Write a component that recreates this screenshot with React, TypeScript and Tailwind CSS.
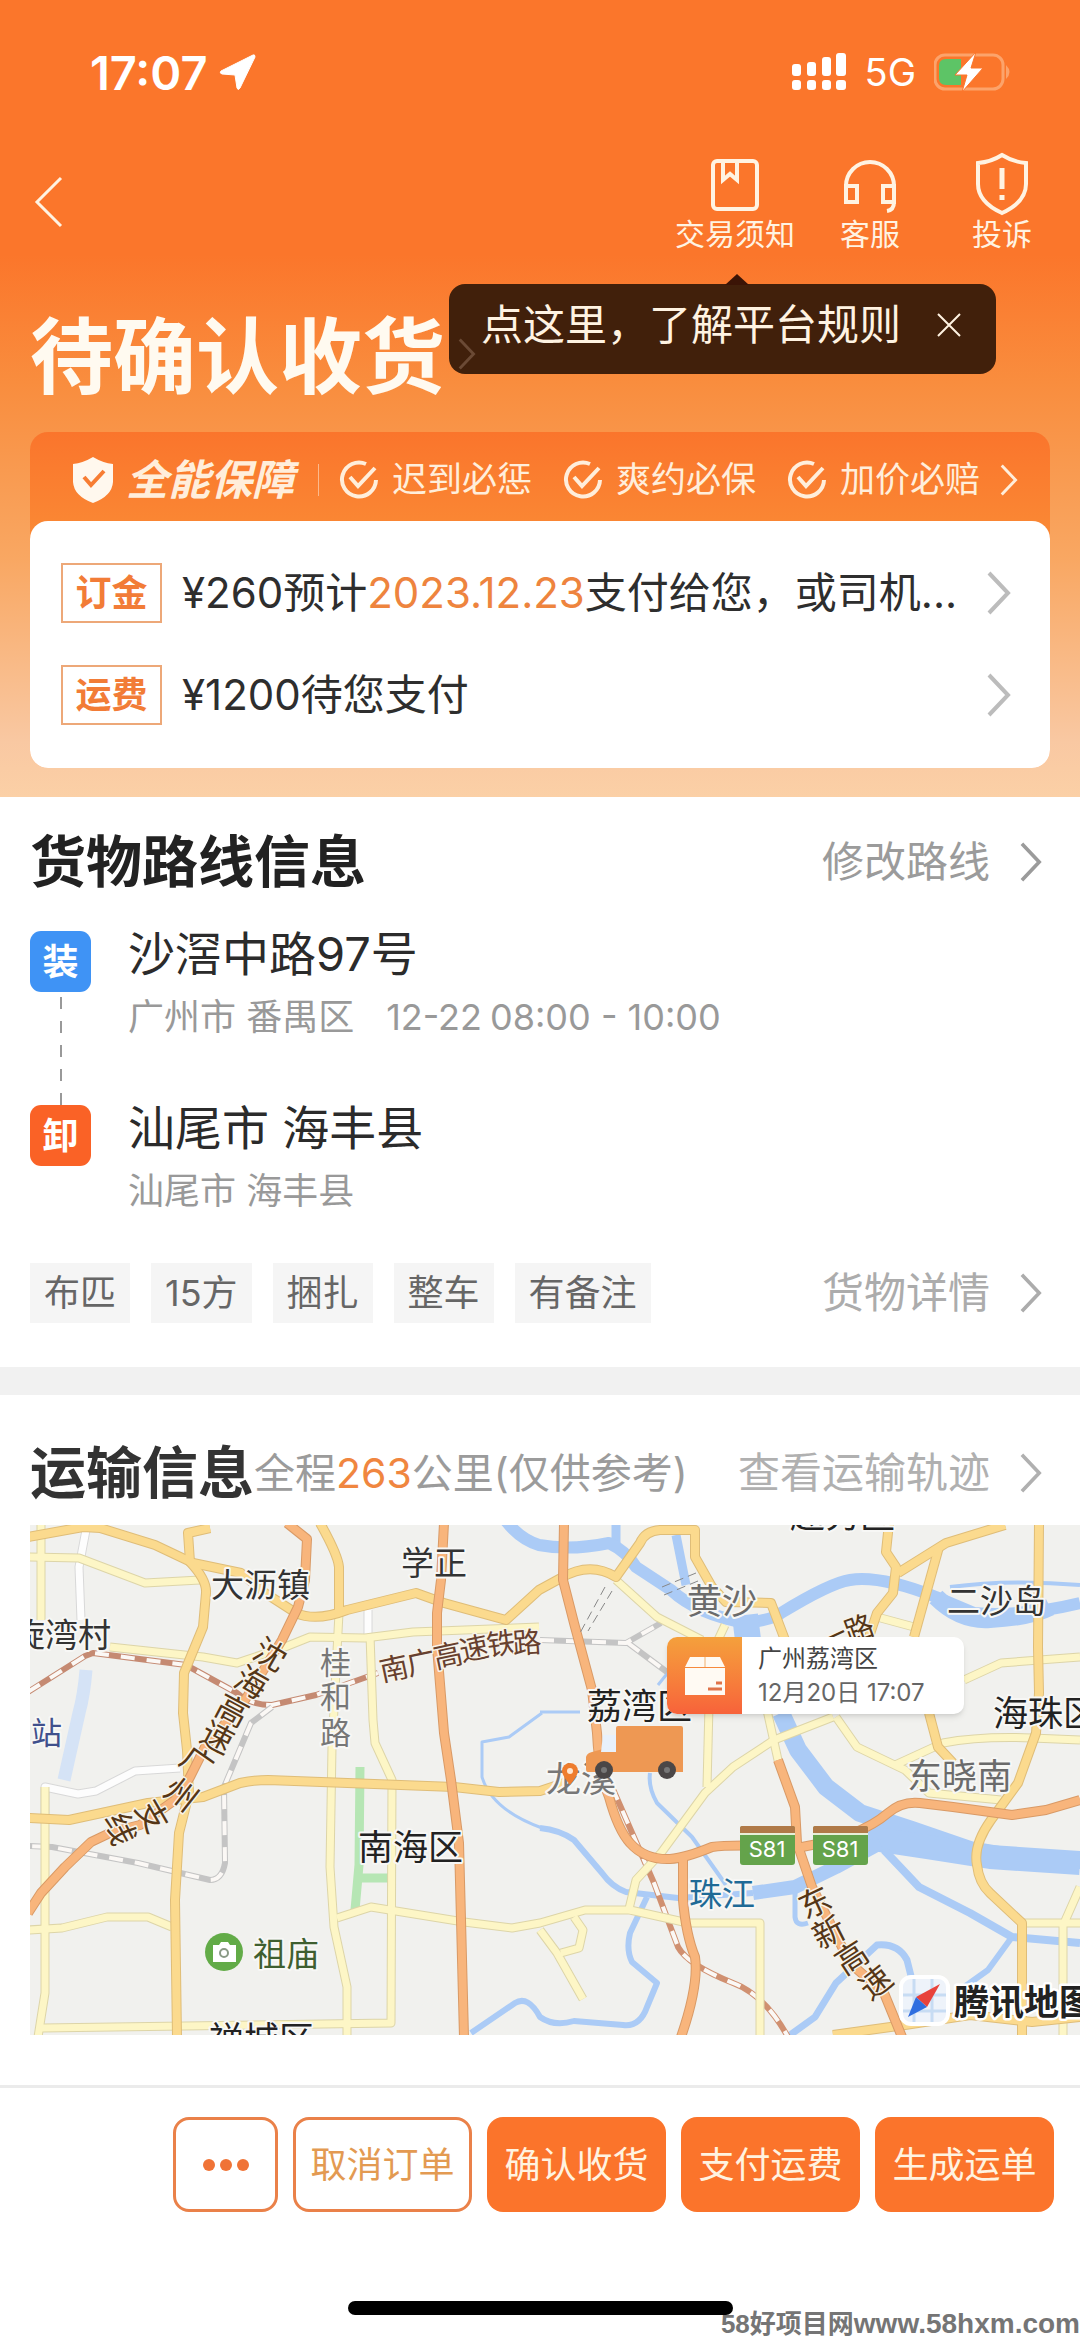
import React from "react";

type ChevronProps = { className?: string; width?: number };

function ChevronRight({ className = "", width = 4 }: ChevronProps) {
  return (
    <svg
      viewBox="0 0 24 44"
      className={className}
      fill="none"
      stroke="currentColor"
      strokeWidth={width}
      aria-hidden="true"
    >
      <path d="M2 2 L21 22 L2 42" />
    </svg>
  );
}

function StatusBar() {
  return (
    <div className="flex h-36 items-center justify-between pl-[90px] pr-[70px] text-white">
      <div className="flex items-center gap-[10px]">
        <span className="text-[47px] font-semibold leading-none">17:07</span>
        <svg viewBox="0 0 38 38" className="h-[38px] w-[38px]" aria-hidden="true">
          <path
            d="M35 2 L3 18 Q1 20 4 21 L17 22 L19 35 Q20 38 22 35 L37 4 Q37 1 35 2Z"
            fill="currentColor"
            stroke="currentColor"
            strokeLinejoin="round"
          />
        </svg>
      </div>
      <div className="flex items-center gap-[18px]">
        <svg viewBox="0 0 56 40" className="h-10 w-14" fill="currentColor" aria-hidden="true">
          <rect x="1" y="12" width="9" height="12" rx="3" />
          <rect x="16" y="10" width="9" height="14" rx="3" />
          <rect x="31" y="5" width="9" height="19" rx="3" />
          <rect x="45" y="1" width="10" height="23" rx="3" />
          <rect x="1" y="28" width="9" height="10" rx="3" />
          <rect x="16" y="28" width="9" height="10" rx="3" />
          <rect x="31" y="28" width="9" height="10" rx="3" />
          <rect x="45" y="28" width="10" height="10" rx="3" />
        </svg>
        <span className="text-[38px] leading-none">5G</span>
        <svg viewBox="0 0 76 42" className="h-[42px] w-[76px]" aria-hidden="true">
          <rect x="1" y="4" width="68" height="34" rx="10" fill="none" stroke="#fca36b" strokeWidth="3" />
          <path d="M12 8 H27 V34 H12 Q5 34 5 27 V15 Q5 8 12 8Z" fill="#5dc466" />
          <path d="M72 14 Q79 21 72 28Z" fill="#fca36b" />
          <path d="M42 1 L21 24 H33 L28 41 L49 17 H37 Z" fill="#fff" stroke="#fb762b" strokeWidth="1" />
        </svg>
      </div>
    </div>
  );
}

function NavBar() {
  return (
    <div className="relative flex h-[116px] items-center justify-between pl-[34px] pr-[46px] text-[#fff3e2]">
      <button type="button" aria-label="返回">
        <svg viewBox="0 0 30 52" className="h-[52px] w-[30px]" fill="none" stroke="currentColor" strokeWidth="3">
          <path d="M27 2 L3 26 L27 50" />
        </svg>
      </button>
      <div className="flex">
        <button type="button" className="flex flex-col items-center">
          <svg viewBox="0 0 64 64" className="h-16 w-16" fill="none" stroke="currentColor" strokeWidth="4" aria-hidden="true">
            <rect x="10" y="9" width="44" height="48" rx="4" />
            <path d="M20 9 V28 L27 22 L34 28 V9" />
          </svg>
          <span className="text-[30px] leading-9">交易须知</span>
        </button>
        <button type="button" className="ml-[43px] flex flex-col items-center">
          <svg viewBox="0 0 64 64" className="h-16 w-16" fill="none" stroke="currentColor" strokeWidth="4" aria-hidden="true">
            <path d="M8 50 V34 A24 24 0 0 1 56 34 V50 Q56 58 49 59" />
            <rect x="8" y="34" width="11" height="16" />
            <rect x="45" y="34" width="11" height="16" />
          </svg>
          <span className="text-[30px] leading-9">客服</span>
        </button>
        <button type="button" className="ml-[68px] flex flex-col items-center">
          <svg viewBox="0 0 64 64" className="h-16 w-16" fill="none" stroke="currentColor" strokeWidth="4" aria-hidden="true">
            <path d="M32 3 Q43 10 56 11 V32 Q56 50 32 61 Q8 50 8 32 V11 Q21 10 32 3Z" />
            <path d="M32 16 V37 M32 43 V48" strokeWidth="5" />
          </svg>
          <span className="text-[30px] leading-9">投诉</span>
        </button>
      </div>
      <div className="absolute right-[84px] top-[140px] flex h-[90px] items-center gap-9 rounded-[16px] bg-[#41200b] pb-2 pl-[32px] pr-[35px]">
        <svg viewBox="0 0 24 11" className="absolute -top-[10px] left-[276px] h-[11px] w-6" aria-hidden="true">
          <path d="M0 11 L12 0 L24 11Z" fill="#3b1406" />
        </svg>
        <ChevronRight className="absolute left-2 top-[54px] h-8 w-5 text-[#6b4a35]" />
        <span className="text-[42px] leading-none">点这里，了解平台规则</span>
        <button type="button" aria-label="关闭">
          <svg viewBox="0 0 24 24" className="h-6 w-6" stroke="currentColor" strokeWidth="2">
            <path d="M1 1 L23 23 M23 1 L1 23" />
          </svg>
        </button>
      </div>
    </div>
  );
}

function Promise({ label }: { label: string }) {
  return (
    <span className="flex items-center gap-[13px]">
      <svg viewBox="0 0 40 40" className="h-10 w-10" fill="none" stroke="currentColor" strokeWidth="4" aria-hidden="true">
        <path d="M27 4 A17 17 0 1 0 37 20" />
        <path d="M11 17 L19 26 L36 8" />
      </svg>
      <span className="text-[35px] leading-none">{label}</span>
    </span>
  );
}

function PayRow({ tag, children }: { tag: string; children: React.ReactNode }) {
  return (
    <button type="button" className="flex w-full items-center text-left">
      <span className="flex h-[60px] w-[101px] shrink-0 items-center justify-center border-2 border-[#eda878] text-[36px] font-bold leading-none text-[#f27c37]">
        {tag}
      </span>
      <span className="ml-5 min-w-0 grow whitespace-nowrap text-[42px] leading-[60px] text-[#2e2e2e]">
        {children}
      </span>
      <ChevronRight className="mx-2 h-11 w-6 shrink-0 text-[#bcbcbc]" />
    </button>
  );
}

function Header() {
  return (
    <header className="bg-[linear-gradient(to_bottom,#fb762b_0,#fb762b_32%,#f98d3e_48%,#f9a762_70%,#f9c8a2_93%,#fbd0a6_100%)] pb-[29px]">
      <StatusBar />
      <NavBar />
      <h1 className="flex h-[172px] items-start pl-[30px] pt-[52px] text-[83px] font-bold leading-[90px] text-[#fffaf0]">
        待确认收货
      </h1>
      <div className="mx-[30px] rounded-[18px] bg-[linear-gradient(to_bottom,#fa752c_0,#fa8a35_110px,#fa8a35_100%)]">
        <button type="button" className="flex h-[89px] w-full items-center pl-[42px] pt-[6px] text-[#ffeedb]">
          <svg viewBox="0 0 42 48" className="h-12 w-[42px]" aria-hidden="true">
            <path d="M21 1 Q31 7 41 8 V26 Q40 40 21 47 Q2 40 1 26 V8 Q11 7 21 1Z" fill="#fff8ee" />
            <path d="M12 21 L19 29 L32 15" fill="none" stroke="#f77d33" strokeWidth="4" />
          </svg>
          <span className="ml-3 text-[42px] font-bold italic leading-none">全能保障</span>
          <span className="ml-6 h-8 w-px bg-[#fcb98c]" />
          <span className="ml-5 flex gap-[31px]">
            <Promise label="迟到必惩" />
            <Promise label="爽约必保" />
            <Promise label="加价必赔" />
          </span>
          <ChevronRight className="ml-5 h-8 w-[18px]" />
        </button>
        <div className="flex flex-col gap-[42px] rounded-[18px] bg-white px-[31px] pb-[43px] pt-[42px]">
          <PayRow tag="订金">
            ¥260预计<span className="text-[#ee843e]">2023.12.23</span>支付给您，或司机...
          </PayRow>
          <PayRow tag="运费">¥1200待您支付</PayRow>
        </div>
      </div>
    </header>
  );
}

function MoreLink({ label, tone }: { label: string; tone: string }) {
  return (
    <a href="#" className={"ml-auto flex items-center gap-[30px] text-[42px] leading-none " + tone}>
      {label}
      <ChevronRight className="h-10 w-[22px]" />
    </a>
  );
}

const tags = ["布匹", "15方", "捆扎", "整车", "有备注"];

function RouteSection() {
  return (
    <section className="px-[30px] pb-11 pt-8">
      <div className="flex items-center pr-2">
        <h2 className="text-[56px] font-bold leading-[66px] text-[#222]">货物路线信息</h2>
        <MoreLink label="修改路线" tone="text-[#9b9b9b]" />
      </div>
      <div className="mt-9 flex gap-[37px]">
        <div className="flex w-[61px] flex-col items-center">
          <span className="flex h-[61px] w-[61px] items-center justify-center rounded-[11px] bg-[#3f93f5] text-[36px] font-bold leading-none text-white">
            装
          </span>
          <svg viewBox="0 0 2 108" className="mt-[5px] h-[108px] w-0.5" aria-hidden="true">
            <path d="M1 0 V108" stroke="#999" strokeWidth="2" strokeDasharray="12 12" />
          </svg>
          <span className="flex h-[61px] w-[61px] items-center justify-center rounded-[11px] bg-[#fa6226] text-[36px] font-bold leading-none text-white">
            卸
          </span>
        </div>
        <div>
          <div className="h-[174px]">
            <p className="text-[47px] leading-[46px] text-[#2b2b2b]">沙滘中路97号</p>
            <p className="mt-5 flex text-[36px] leading-10 text-[#999]">
              <span>广州市 番禺区</span>
              <span className="ml-8">12-22</span>
              <span className="ml-2">08:00 - 10:00</span>
            </p>
          </div>
          <p className="text-[47px] leading-[46px] text-[#2b2b2b]">汕尾市 海丰县</p>
          <p className="mt-5 text-[36px] leading-10 text-[#999]">汕尾市 海丰县</p>
        </div>
      </div>
      <div className="mt-[52px] flex items-center pr-2">
        <ul className="flex gap-[21px]">
          {tags.map((tag) => (
            <li key={tag} className="bg-[#f5f5f5] px-[14px] text-[36px] leading-[60px] text-[#666]">
              {tag}
            </li>
          ))}
        </ul>
        <MoreLink label="货物详情" tone="text-[#acacac]" />
      </div>
    </section>
  );
}

// x and y are the middle of the glyph
const alongHighway = [
  { t: "沈", x: 240, y: 130, r: 30 },
  { t: "海", x: 221, y: 158, r: 30 },
  { t: "高", x: 202, y: 186, r: 28 },
  { t: "速", x: 187, y: 213, r: 28 },
  { t: "广", x: 167, y: 238, r: 35 },
  { t: "州", x: 151, y: 270, r: 38 },
  { t: "支", x: 122, y: 291, r: 60 },
  { t: "线", x: 90, y: 304, r: 72 },
];

const alongRail = [
  { t: "南", x: 364, y: 143, r: -12 },
  { t: "广", x: 391, y: 137, r: -12 },
  { t: "高", x: 418, y: 130, r: -12 },
  { t: "速", x: 444, y: 123, r: -12 },
  { t: "铁", x: 471, y: 118, r: -8 },
  { t: "路", x: 497, y: 117, r: -4 },
];

const alongDongxin = [
  { t: "东", x: 785, y: 378, r: -25 },
  { t: "新", x: 799, y: 408, r: -27 },
  { t: "高", x: 822, y: 433, r: -33 },
  { t: "速", x: 846, y: 458, r: -38 },
];

const alongRoad = [
  { t: "一", x: 802, y: 112, r: -25 },
  { t: "路", x: 829, y: 103, r: -20 },
];

const places = [
  { t: "大沥镇", x: 181, y: 60, s: 33, c: "#333" },
  { t: "学正", x: 371, y: 38, s: 33, c: "#333" },
  { t: "旋湾村", x: -18, y: 110, s: 33, c: "#333" },
  { t: "桂", x: 290, y: 137, s: 31, c: "#777" },
  { t: "和", x: 290, y: 171, s: 31, c: "#777" },
  { t: "路", x: 290, y: 207, s: 31, c: "#777" },
  { t: "站", x: 1, y: 207, s: 31, c: "#40508c" },
  { t: "南海区", x: 328, y: 323, s: 35, c: "#222" },
  { t: "祖庙", x: 223, y: 429, s: 33, c: "#3f5f30" },
  { t: "禅城区", x: 179, y: 515, s: 35, c: "#222" },
  { t: "越秀区", x: 760, y: -9, s: 35, c: "#222" },
  { t: "黄沙", x: 657, y: 77, s: 35, c: "#6b6b6b" },
  { t: "二沙岛", x: 917, y: 76, s: 33, c: "#333" },
  { t: "荔湾区", x: 557, y: 182, s: 35, c: "#222" },
  { t: "海珠区", x: 963, y: 189, s: 35, c: "#222" },
  { t: "东晓南", x: 877, y: 252, s: 35, c: "#6b6b6b" },
  { t: "龙溪", x: 516, y: 255, s: 35, c: "#777" },
  { t: "珠江", x: 659, y: 369, s: 33, c: "#1f6a96" },
];

const highways = [
  "M257 -2 L277 14 L275 55 L268 82 L252 115 L215 175 L175 222 L160 252 L145 275 L110 300 L82 307 L61 317 L35 342 L11 368 L-2 388",
  "M414 -2 L411 55 L407 88 L407 122 L414 208 L421 255 L429 318 L431 395 L434 512",
  "M534 -2 L533 55 L544 98 L562 165 L567 208 Q569 250 579 272 Q588 305 600 318 Q615 335 640 334 Q655 333 682 322 Q700 319 772 322 Q830 312 858 288 Q872 276 890 278 L923 282 L982 290 L1016 285 L1050 275",
  "M653 335 V375 Q656 410 665 432 Q669 460 651 512",
  "M748 235 L765 282 L767 318 L782 362 L820 438 L854 468 L872 512",
];

const mainRoads = [
  "M-2 12 L53 2 L70 3 L125 20 L163 38 L211 48 L235 68 L266 88 Q286 97 317 85 L386 68 L414 78 L476 95 L509 65 L531 53 Q560 36 586 52 L610 18 Q615 6 630 5 H665 V32 L682 62 L696 77 L741 78 L755 115",
  "M180 3 L158 8 L160 37 Q177 55 176 68 L173 102 L154 148 L153 188 L157 225 L159 268 L149 308 L145 375 L147 512",
  "M290 -2 Q308 30 309 42 V85",
  "M-2 293 L39 295 L118 278 L173 272 L210 258 Q225 255 238 255 L424 262 L469 267 L510 266 L540 256",
  "M1009 -2 L1008 122 L1009 168 L1006 208 L988 258 L961 295 Q943 320 947 340 Q949 358 960 368 L992 398 V512",
  "M975 0 L916 18 L868 48",
  "M859 -2 L856 27 L866 42 L863 68 L847 88 L838 115",
  "M909 22 L884 112",
  "M899 188 L908 222 L923 238",
  "M803 510 L875 500 L940 490 L1002 497 L1050 492",
];

const minorRoads = [
  "M11 -2 V95",
  "M15 262 V468 L8 512",
  "M-2 32 L49 33 L115 58 L170 55",
  "M80 122 L173 132 L207 138 L255 122 L280 112 L335 113 L383 107 L509 102",
  "M340 110 L343 195 L345 218 L362 255 L361 498 L12 503",
  "M309 88 L302 222 L300 342 L304 402 L317 462 V512",
  "M-2 405 L32 403 L77 392 L118 392 L142 402",
  "M307 393 L341 382 L434 397 L482 403 L510 398 L555 385 L600 385 L658 398 H730 V512",
  "M803 192 L744 215 L703 242 L675 268 L631 328 L606 355 L598 388",
  "M679 180 L677 262",
  "M737 185 L748 235",
  "M806 192 L827 222 L875 245 L899 268 L971 275",
  "M865 240 L913 218 Q950 211 1002 213 L1050 215",
  "M934 155 L971 138 L1050 132",
  "M510 405 L527 428 L553 474 M531 428 L549 423 L553 405 L544 392",
  "M992 398 H1050 M1033 398 V512 M1050 362 L1035 396",
  "M586 55 L627 92 L672 115",
  "M847 92 L884 102",
  "M695 100 L688 115",
];

const rivers = [
  { d: "M586 -2 V20 M646 10 L656 60", w: 9 },
  { d: "M476 -4 Q490 14 509 20 Q540 26 579 18 Q596 26 606 42 L641 65 Q668 90 717 98 Q745 94 751 88 Q800 58 820 55 Q850 50 906 72 L944 88 Q992 92 1050 78", w: 12 },
  { d: "M906 72 Q930 96 960 94 Q1000 92 1020 82", w: 18 },
  { d: "M715 90 L718 115", w: 26 },
  { d: "M920 62 Q980 54 1050 60", w: 4 },
  { d: "M751 188 L768 225 L796 262 L830 288 L882 305 L940 325 L999 335 H1050", w: 18 },
  { d: "M830 312 Q900 322 960 332 L1050 338", w: 24 },
  { d: "M850 318 L806 342 L765 362 L723 368", w: 14 },
  { d: "M723 368 L648 373 L596 367 Q582 362 572 348 L544 315 Q530 305 510 303", w: 6 },
  { d: "M854 325 L889 362 L940 388 L982 412 L1050 418", w: 8 },
  { d: "M982 412 L958 445 L930 465", w: 6 },
  { d: "M882 455 L877 435 Q868 418 847 420 L834 432 L806 458 L785 492 L760 510", w: 7 },
  { d: "M765 365 V392 Q766 402 778 398", w: 5 },
  { d: "M617 372 L600 408 Q596 425 602 437 L627 458 L617 482 Q610 502 593 500 L544 496 Q524 502 510 492 Q498 470 485 478 L441 508", w: 6 },
  { d: "M620 248 Q618 262 627 278 L662 312 L696 360", w: 4 },
  { d: "M512 188 L479 212 L452 217 V252 Q462 285 512 303", w: 3 },
  { d: "M510 187 L550 187 M640 145 L628 160", w: 3 },
];

const rails = [
  { d: "M-2 167 L55 131 L63 128 L156 140 L207 168 Q220 180 242 180 L286 170 L348 148", c: "#c58a72" },
  { d: "M242 182 L221 198 L194 262 L195 338 Q192 355 180 355 L108 338 L22 322 L-2 321", c: "#c4c4c4" },
  { d: "M582 262 L624 358 L648 422 Q658 440 703 458 Q735 470 758 512", c: "#d09070" },
  { d: "M510 115 L596 118 L631 98 M598 118 L637 147", c: "#c4c4c4" },
];

type Glyph = { t: string; x: number; y: number; r: number };

function TurnedText({ glyphs, color, size }: { glyphs: Glyph[]; color: string; size: number }) {
  return (
    <>
      {glyphs.map((g) => (
        <text
          key={g.t}
          x={g.x}
          y={g.y + 11}
          transform={`rotate(${g.r} ${g.x} ${g.y})`}
          fontSize={size}
          textAnchor="middle"
          fill={color}
          stroke="#f7f3ea"
          strokeWidth="3"
          paintOrder="stroke"
        >
          {g.t}
        </text>
      ))}
    </>
  );
}

function RoadSign({ x }: { x: number }) {
  return (
    <g>
      <rect x={x} y="301" width="55" height="39" rx="3" fill="#64a34b" />
      <rect x={x} y="301" width="55" height="8" rx="2" fill="#b07a48" />
      <path d={`M${x} 309 h55`} stroke="#e8efd8" strokeWidth="2" />
      <text x={x + 27} y="332" fontSize="22" textAnchor="middle" fill="#fff">
        S81
      </text>
    </g>
  );
}

function RouteMap() {
  return (
    <div className="relative ml-[30px] mt-[19px] h-[510px] overflow-hidden bg-[#f1f1ee]">
      <svg
        viewBox="0 0 1050 510"
        preserveAspectRatio="xMinYMin slice"
        className="block h-full w-full"
        fill="none"
        strokeLinejoin="round"
        role="img"
        aria-label="运输地图"
      >
        <path d="M56 145 Q54 170 49 188 L34 255" stroke="#d5e3f6" strokeWidth="13" />
        {rivers.map((r) => (
          <path key={r.d} d={r.d} stroke="#abcbf6" strokeWidth={r.w} />
        ))}
        <path d="M330 242 L329 340 L325 385 M330 353 H358" stroke="#b6e6b4" strokeWidth="9" />
        <path d="M56 5 L49 42 L51 95 M15 295 V262 L48 269 L66 266 L105 246 L150 243 M338 85 V110" stroke="#d8d8d8" strokeWidth="9" />
        <path d="M56 5 L49 42 L51 95 M15 295 V262 L48 269 L66 266 L105 246 L150 243 M338 85 V110" stroke="#fdfdfd" strokeWidth="7" />
        {rails.map((r) => (
          <g key={r.d}>
            <path d={r.d} stroke={r.c} strokeWidth="6" />
            <path d={r.d} stroke="#fbf8f5" strokeWidth="4" strokeDasharray="14 12" />
          </g>
        ))}
        {minorRoads.map((d) => (
          <path key={d} d={d} stroke="#ddd5a8" strokeWidth="9" />
        ))}
        {minorRoads.map((d) => (
          <path key={d} d={d} stroke="#fdf6c6" strokeWidth="7" />
        ))}
        {mainRoads.map((d) => (
          <path key={d} d={d} stroke="#dfbd78" strokeWidth="10" />
        ))}
        {mainRoads.map((d) => (
          <path key={d} d={d} stroke="#fbda8e" strokeWidth="8" />
        ))}
        {highways.map((d) => (
          <path key={d} d={d} stroke="#d99a66" strokeWidth="10" />
        ))}
        {highways.map((d) => (
          <path key={d} d={d} stroke="#f8b57c" strokeWidth="8" />
        ))}
        <path d="M632 62 L666 48 M634 70 L668 56 M575 62 L550 108 M582 66 L558 106" stroke="#888" strokeWidth="1" strokeDasharray="9 5" />

        {places.map((p) => (
          <text
            key={p.t + p.y}
            x={p.x}
            y={p.y + 12}
            fontSize={p.s}
            fill={p.c}
            stroke="#f7f7f5"
            strokeWidth="4"
            paintOrder="stroke"
          >
            {p.t}
          </text>
        ))}
        <TurnedText glyphs={alongHighway} color="#553616" size={32} />
        <TurnedText glyphs={alongRail} color="#67402e" size={29} />
        <TurnedText glyphs={alongDongxin} color="#553616" size={32} />
        <TurnedText glyphs={alongRoad} color="#553616" size={29} />
        <RoadSign x={710} />
        <RoadSign x={783} />

        <circle cx="194" cy="427" r="19" fill="#62ab47" />
        <path d="M183 420 H189 L191 417 H198 L200 420 H206 V437 H183Z" fill="#fff" />
        <circle cx="194" cy="428" r="4" stroke="#8a9a85" strokeWidth="2" />

        <path d="M540 260 Q532 250 532 246 A8 8 0 0 1 548 246 Q548 250 540 260Z" fill="#ee7d2e" />
        <circle cx="540" cy="246" r="3" fill="#ffe6d0" />

        <path d="M588 201 H651 Q653 201 653 203 V247 H558 Q556 247 556 244 V232 Q557 228 562 227 L573 224 H586 V203 Q586 201 588 201Z" fill="#ee9853" />
        <path d="M573 210 H586 V227 H571Z" fill="#e8f1fb" />
        <circle cx="574" cy="245" r="9" fill="#4b4747" />
        <circle cx="637" cy="245" r="9" fill="#4b4747" />
        <circle cx="574" cy="245" r="3" fill="#777" />
        <circle cx="637" cy="245" r="3" fill="#777" />

        <rect x="871" y="452" width="47" height="47" rx="10" fill="#eef3fa" stroke="#fff" strokeWidth="4" />
        <path d="M884 454 V497 M902 454 V497 M873 470 H916 M873 486 H916" stroke="#c7dcf3" strokeWidth="3" />
        <path d="M910 459 L886 472 L897 482Z" fill="#e8423c" />
        <path d="M878 492 L886 472 L897 482Z" fill="#2f6ee0" />
        <text x="924" y="490" fontSize="35" fontWeight="700" fill="#222" stroke="#fff" strokeWidth="5" paintOrder="stroke">
          腾讯地图
        </text>
      </svg>
      <div className="absolute left-[637px] top-[112px] flex h-[77px] w-[297px] overflow-hidden rounded-[10px] bg-white shadow-md">
        <div className="flex w-[75px] items-center justify-center bg-linear-to-b from-[#f4a03c] to-[#f7623a]">
          <svg viewBox="0 0 42 40" className="h-10 w-[42px]" aria-hidden="true">
            <path d="M6 1 H36 L41 11 H1Z M1 12 H41 V39 H1Z" fill="#fffaf3" />
            <path d="M21 1 V11" stroke="#f0b070" />
            <path d="M32 27 H38 M24 33 H38" stroke="#e0744a" strokeWidth="3" />
          </svg>
        </div>
        <div className="flex flex-col justify-center pl-4">
          <span className="text-[24px] leading-[34px] text-[#444]">广州荔湾区</span>
          <span className="text-[24px] leading-[34px] text-[#666]">12月20日 17:07</span>
        </div>
      </div>
    </div>
  );
}

function TransportSection() {
  return (
    <section className="border-t-[28px] border-[#f1f1f1] pb-[50px] pt-[45px]">
      <div className="flex items-center pl-[30px] pr-[38px]">
        <h2 className="text-[56px] font-bold leading-[66px] text-[#333]">运输信息</h2>
        <p className="text-[41px] leading-none text-[#9b9b9b]">
          全程<span className="text-[#f0863f]">263</span>公里(仅供参考)
        </p>
        <MoreLink label="查看运输轨迹" tone="text-[#b0b0b0]" />
      </div>
      <RouteMap />
    </section>
  );
}

const solid =
  "h-[95px] w-[179px] rounded-[16px] bg-[#fb742b] text-[36px] leading-none text-[#fff3e0]";

function Footer() {
  return (
    <footer className="relative border-t-[3px] border-[#ebebeb] pb-[22px] pt-[29px]">
      <div className="flex justify-end gap-[15px] pr-[26px]">
        <button
          type="button"
          aria-label="更多"
          className="flex h-[95px] w-[105px] items-center justify-center gap-[5px] rounded-[16px] border-[3px] border-[#ea8149]"
        >
          <span className="h-3 w-3 rounded-full bg-[#f07336]" />
          <span className="h-3 w-3 rounded-full bg-[#f07336]" />
          <span className="h-3 w-3 rounded-full bg-[#f07336]" />
        </button>
        <button
          type="button"
          className="h-[95px] w-[179px] rounded-[16px] border-[3px] border-[#ea8149] text-[36px] leading-none text-[#e39a52]"
        >
          取消订单
        </button>
        <button type="button" className={solid}>确认收货</button>
        <button type="button" className={solid}>支付运费</button>
        <button type="button" className={solid}>生成运单</button>
      </div>
      <div className="mx-auto mt-[89px] h-[14px] w-[385px] rounded-full bg-black" />
      <p className="absolute bottom-0 right-0 flex items-center whitespace-nowrap text-[26px] font-bold leading-[26px] text-[#757575]">
        <span className="font-['Liberation_Sans',sans-serif]">58</span>
        好项目网
        <span className="font-['Liberation_Sans',sans-serif] text-[28px]">www.58hxm.com</span>
      </p>
    </footer>
  );
}

export default function App() {
  return (
    <main className="overflow-hidden bg-white font-['Inter','Noto_Sans_CJK_SC',sans-serif]">
      <Header />
      <RouteSection />
      <TransportSection />
      <Footer />
    </main>
  );
}
